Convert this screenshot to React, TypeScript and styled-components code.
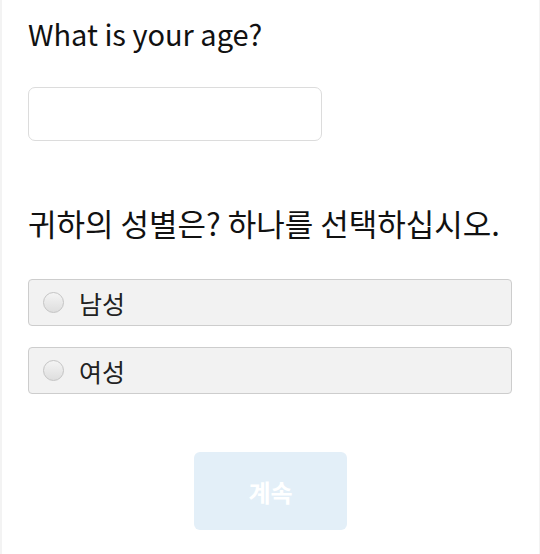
import { useState } from "react";
import styled, { createGlobalStyle } from "styled-components";

const GlobalStyle = createGlobalStyle`
  html, body {
    margin: 0;
    padding: 0;
    background: #f3f3f3;
  }
  body {
    font-family: "Noto Sans CJK KR", "Noto Sans", sans-serif;
  }
`;

const Page = styled.div`
  margin: 0 1px 0 2px;
  min-height: 554px;
  background: #ffffff;
  padding: 9px 26px 0 26px;
  box-sizing: border-box;
  display: flex;
  flex-direction: column;
`;

const Question = styled.div<{ $gap: number }>`
  display: flex;
  flex-direction: column;
  margin-bottom: ${(p) => p.$gap}px;
`;

const Title = styled.h2<{ $size: number }>`
  margin: 0;
  font-weight: 400;
  font-size: ${(p) => p.$size}px;
  line-height: 48px;
  color: #111;
  white-space: nowrap;
`;

const AgeInput = styled.input`
  margin-top: 30px;
  width: 294px;
  height: 54px;
  box-sizing: border-box;
  border: 1px solid #dcdcdc;
  border-radius: 7px;
  background: #fff;
  font-size: 20px;
  padding: 0 12px;
  outline: none;
`;

const Options = styled.div`
  margin-top: 32px;
  display: flex;
  flex-direction: column;
  gap: 21px;
`;

const Option = styled.label`
  display: flex;
  align-items: center;
  gap: 15px;
  width: 484px;
  height: 47px;
  box-sizing: border-box;
  padding-left: 14px;
  background: #f2f2f2;
  border: 1px solid #cdcdcd;
  border-radius: 4px;
  font-size: 25px;
  color: #222;
  cursor: pointer;
`;

const Radio = styled.span<{ $on: boolean }>`
  width: 21px;
  height: 21px;
  border-radius: 50%;
  box-sizing: border-box;
  border: 1px solid #c4c4c4;
  background: ${(p) =>
    p.$on ? "radial-gradient(circle, #555 0 4px, #e6e6e6 5px)" : "linear-gradient(#f4f4f4, #dedede)"};
`;

const Footer = styled.div`
  display: flex;
  justify-content: center;
  margin-top: 58px;
`;

const ContinueButton = styled.button`
  width: 153px;
  height: 78px;
  border: none;
  border-radius: 6px;
  background: #e3eff8;
  color: #ffffff;
  font-family: inherit;
  font-size: 24px;
  font-weight: 700;
`;

export default function App() {
  const [gender, setGender] = useState<string | null>(null);

  return (
    <>
      <GlobalStyle />
      <Page>
        <Question $gap={58}>
          <Title $size={29}>What is your age?</Title>
          <AgeInput type="text" />
        </Question>

        <Question $gap={0}>
          <Title $size={31}>귀하의 성별은? 하나를 선택하십시오.</Title>
          <Options>
            {["남성", "여성"].map((g) => (
              <Option key={g} onClick={() => setGender(g)}>
                <Radio $on={gender === g} />
                {g}
              </Option>
            ))}
          </Options>
        </Question>

        <Footer>
          <ContinueButton disabled={!gender}>계속</ContinueButton>
        </Footer>
      </Page>
    </>
  );
}
